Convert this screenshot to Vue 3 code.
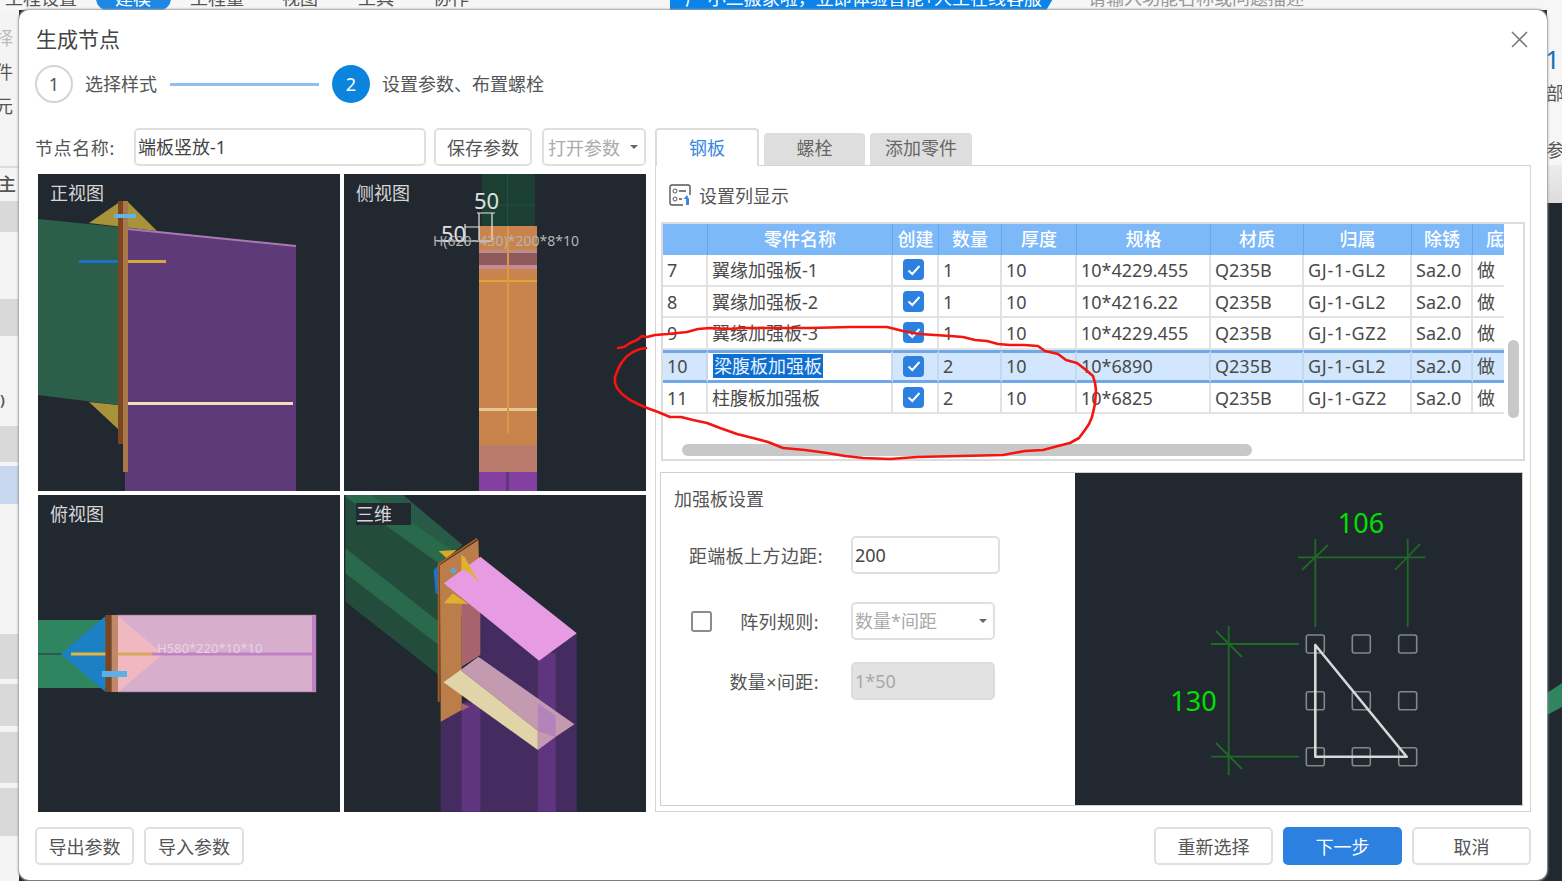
<template>
  <div class="app">
    <!-- software window behind the dialog -->
    <div class="topbar">
      <div class="nav-item" style="width: 96px; padding-left: 5px">工程设置</div>
      <div class="nav-item nav-active">建模</div>
      <div class="nav-item" style="width: 92px">工程量</div>
      <div class="nav-item" style="width: 76px">视图</div>
      <div class="nav-item" style="width: 75px">工具</div>
      <div class="nav-item" style="width: 75px">协作</div>
      <div class="banner">广 小二搬家啦，立即体验智能+人工在线客服</div>
      <div class="search">
        <span>请输入功能名称或问题描述</span>
        <svg width="16" height="16" viewBox="0 0 16 16"><circle cx="7" cy="5" r="6" fill="none" stroke="#999" stroke-width="1.5" /></svg>
      </div>
    </div>
    <div class="under">
      <div class="side-left">
        <div class="side-text muted">择</div>
        <div class="side-text">件</div>
        <div class="side-text">元</div>
        <div class="side-head">主</div>
        <div class="band" style="height: 31px"></div>
        <div class="gap" style="height: 67px"></div>
        <div class="band" style="height: 37px"></div>
        <div class="gap paren">)</div>
        <div class="band" style="height: 36px"></div>
        <div class="band selected"></div>
        <div class="gap" style="height: 130px"></div>
        <div class="band" style="height: 45px"></div>
        <div class="band" style="height: 42px; margin-top: 5px"></div>
        <div class="band" style="height: 51px; margin-top: 6px"></div>
        <div class="band" style="height: 48px; margin-top: 5px"></div>
      </div>
      <div class="side-right">
        <div class="right-top">
          <div class="right-mark">1</div>
          <div class="side-text">部</div>
          <div class="side-text" style="margin-top: 23px">参</div>
        </div>
        <div class="right-band"></div>
        <div class="right-dark">
          <svg width="15" height="40" viewBox="0 0 15 40"><polygon points="0,12 15,2 15,26 0,34" fill="#2f8560" /></svg>
        </div>
      </div>
    </div>

    <div class="dialog">
      <div class="dialog-head">
        <div class="dialog-title">生成节点</div>
        <svg class="close" width="17" height="17" viewBox="0 0 17 17">
          <path d="M1 1L16 16M16 1L1 16" stroke="#7d7d7d" stroke-width="1.6" fill="none" />
        </svg>
      </div>

      <div class="stepper">
        <div class="step-circle">1</div>
        <div class="step-text">选择样式</div>
        <div class="step-line"></div>
        <div class="step-circle current">2</div>
        <div class="step-text">设置参数、布置螺栓</div>
      </div>

      <div class="body">
        <div class="left-col">
          <div class="name-row">
            <div class="name-label">节点名称:</div>
            <div class="field name-field">端板竖放-1</div>
            <button class="btn save-btn">保存参数</button>
            <button class="btn open-btn">打开参数<i class="caret"></i></button>
          </div>

          <div class="views">
            <div class="view">
              <div class="view-label">正视图</div>
              <svg class="view-svg" viewBox="38 174 302 317">
                <polygon points="89,223 121,201 127,201 157,231" fill="#a8933a" />
                <polygon points="89,402 118,405 118,429" fill="#a8933a" />
                <polygon points="38,219 118,227 118,405 38,395" fill="#2b5f4a" />
                <polygon points="128,228 296,246 296,491 125,491 125,300" fill="#5f3a78" />
                <line x1="128" y1="229" x2="296" y2="246" stroke="#a87ab0" stroke-width="2" />
                <rect x="118" y="201" width="5" height="243" fill="#7a4520" />
                <rect x="123" y="201" width="5" height="271" fill="#a9784a" />
                <rect x="114" y="214" width="22" height="4" fill="#5fb4e8" />
                <rect x="79" y="260" width="39" height="3" fill="#1f6fc8" />
                <rect x="128" y="260" width="38" height="3" fill="#d8a838" />
                <rect x="128" y="402" width="165" height="3" fill="#efe0b8" />
              </svg>
            </div>

            <div class="view">
              <div class="view-label">侧视图</div>
              <svg class="view-svg" viewBox="344 174 302 317">
                <rect x="482" y="174" width="53" height="52" fill="#1b3f33" />
                <path d="M507.5 174V226M482 205H535" stroke="#23503f" stroke-width="1" />
                <rect x="479" y="226" width="58" height="219" fill="#c9844e" />
                <rect x="479" y="250" width="58" height="3" fill="#c08a8a" />
                <rect x="479" y="253" width="58" height="12" fill="#8f5a5c" />
                <rect x="479" y="265" width="58" height="4" fill="#c88a9a" />
                <rect x="479" y="280" width="58" height="2" fill="#d8a838" />
                <rect x="479" y="408" width="58" height="3" fill="#e8c890" />
                <rect x="507" y="226" width="2" height="207" fill="#d89848" />
                <rect x="479" y="445" width="58" height="27" fill="#b97c6c" />
                <rect x="479" y="472" width="58" height="19" fill="#8340a0" />
                <rect x="506" y="472" width="3" height="19" fill="#5f3a78" />
                <path d="M477 213H495M479 213V240M492 213V240M465 227H479M465 224V243M437 241H492" stroke="#e8e8e8" stroke-width="1.2" fill="none" />
                <text x="474" y="209" class="dim-white">50</text>
                <text x="441" y="242" class="dim-white">50</text>
                <text x="433" y="246" class="dim-gray">H(620~430)*200*8*10</text>
              </svg>
            </div>

            <div class="view">
              <div class="view-label">俯视图</div>
              <svg class="view-svg" viewBox="38 495 302 317">
                <rect x="38" y="620" width="68" height="68" fill="#2f8560" />
                <rect x="38" y="653" width="33" height="2" fill="#2a5a48" />
                <polygon points="61,654 105.5,616 105.5,692" fill="#1c80c4" />
                <rect x="71" y="652.5" width="35" height="3" fill="#e0b840" />
                <rect x="118" y="615" width="198" height="77" fill="#d8aecd" stroke="#8a6a8a" stroke-width="0.6" />
                <rect x="312" y="615.5" width="4" height="76" fill="#c080c8" />
                <polygon points="118,616 163,654 118,692" fill="#f0b8c0" />
                <rect x="105.5" y="615" width="6" height="77" fill="#7a4520" />
                <rect x="111.5" y="615" width="6.5" height="77" fill="#c08a6a" />
                <rect x="118" y="652.5" width="34" height="3" fill="#d8a860" />
                <rect x="152" y="652.5" width="160" height="3" fill="#c080c8" />
                <rect x="102" y="671" width="25" height="6" fill="#5ab0e8" />
                <text x="157" y="653" class="dim-pink">H580*220*10*10</text>
              </svg>
            </div>

            <div class="view">
              <div class="view-label">三维</div>
              <svg class="view-svg" viewBox="344 495 302 317">
                <!-- coordinates below were read off a zoomed crop, so the group maps them back -->
                <g transform="translate(30 490) scale(0.3968 0.3333)">
                  <polygon points="795,15 940,15 1090,165 1030,220 1030,555 795,335" fill="#234c3d" />
                  <polygon points="860,15 940,15 1090,165 1070,185" fill="#285a48" />
                  <polygon points="795,15 860,15 1070,185 1030,220 795,20" fill="#2a6a4c" />
                  <polygon points="795,175 1030,395 1030,465 795,250" fill="#2a6a4c" />
                  <polygon points="1135,330 1285,510 1378,430 1378,965 1035,965 1035,690 1135,600" fill="#452c60" />
                  <rect x="1088" y="640" width="47" height="325" fill="#5f3580" />
                  <rect x="1280" y="490" width="45" height="475" fill="#5f3580" />
                  <polygon points="1030,183 1075,180 1050,205" fill="#d8a828" />
                  <polygon points="1017,240 1030,225 1030,315 1022,310" fill="#1f70c8" />
                  <polygon points="1033,225 1130,150 1135,340 1088,375 1088,660 1035,695" fill="#bb7d4a" />
                  <polygon points="1088,340 1135,300 1135,495 1088,530 1088,640 1108,650 1088,662" fill="#a8646e" />
                  <polyline points="1030,635 1030,222 1127,146" fill="none" stroke="#a85c20" stroke-width="5" />
                  <polygon points="1043,280 1135,200 1378,430 1283,512" fill="#e79be2" />
                  <polygon points="1087,195 1095,200 1132,278 1105,245 1087,240" fill="#e0b030" />
                  <polygon points="1043,340 1065,310 1105,342" fill="#e0b030" />
                  <ellipse cx="1067" cy="242" rx="7" ry="8" fill="#55a8dc" />
                  <polygon points="1085,540 1130,500 1372,703 1325,740 1280,722" fill="#c49ab0" />
                  <polygon points="1280,640 1325,678 1325,740 1280,722" fill="#b384bc" />
                  <polygon points="1042,577 1085,540 1280,722 1280,780" fill="#e0d4a8" />
                  <polygon points="1280,722 1325,740 1280,780" fill="#c49ab0" />
                </g>
              </svg>
            </div>
          </div>
        </div>

        <div class="right-col">
          <div class="tabs">
            <div
              v-for="tab in tabs"
              :key="tab"
              class="tab"
              :class="{ active: tab === activeTab }"
            >{{ tab }}</div>
          </div>

          <div class="pane">
            <div class="col-setting">
              <svg width="23" height="22" viewBox="0 0 23 22">
                <rect x="1" y="1" width="20" height="20" rx="2" fill="none" stroke="#555" stroke-width="1.4" />
                <circle cx="6" cy="7" r="2" fill="none" stroke="#555" />
                <circle cx="6" cy="15" r="2" fill="none" stroke="#555" />
                <path d="M10 7H17M10 15H13" stroke="#555" stroke-width="1.3" />
                <rect x="14" y="11" width="9" height="11" fill="#fff" />
                <path d="M18 11L14.5 15H17V21H20V15" fill="#3a86e0" />
              </svg>
              <span>设置列显示</span>
            </div>

            <div class="table-box">
              <table class="grid">
                <colgroup>
                  <col v-for="col in columns" :key="col.title" :style="{ width: col.width + 'px' }" />
                </colgroup>
                <thead>
                  <tr>
                    <th v-for="col in columns" :key="col.title">{{ col.title }}</th>
                  </tr>
                </thead>
                <tbody>
                  <tr v-for="row in rows" :key="row.no" :class="{ current: row.no === 10 }">
                    <td>{{ row.no }}</td>
                    <td :class="{ 'name-cell': row.no === 10 }">
                      <span :class="{ picked: row.no === 10 }">{{ row.name }}</span>
                    </td>
                    <td class="check-cell">
                      <span class="check">
                        <svg width="14" height="12" viewBox="0 0 14 12"><path d="M1.5 6.5L5.3 10L12.5 2" fill="none" stroke="#fff" stroke-width="2" /></svg>
                      </span>
                    </td>
                    <td>{{ row.qty }}</td>
                    <td>{{ row.thick }}</td>
                    <td>{{ row.spec }}</td>
                    <td>{{ row.material }}</td>
                    <td class="owner-cell">{{ row.owner }}</td>
                    <td>{{ row.rust }}</td>
                    <td>做</td>
                  </tr>
                </tbody>
              </table>
              <div class="scroll-h"></div>
              <div class="scroll-v"></div>
            </div>

            <div class="lower">
              <div class="form">
                <div class="form-title">加强板设置</div>
                <div class="form-row first">
                  <div class="form-label" style="width: 162px">距端板上方边距:</div>
                  <div class="field margin-field">200</div>
                </div>
                <div class="form-row second">
                  <span class="plain-check"></span>
                  <div class="form-label" style="width: 107px">阵列规则:</div>
                  <div class="field rule-field muted-text">数量*间距<i class="caret"></i></div>
                </div>
                <div class="form-row third">
                  <div class="form-label" style="width: 158px">数量×间距:</div>
                  <div class="field rule-field disabled">1*50</div>
                </div>
              </div>

              <svg class="preview" viewBox="1075 473 447 332">
                <g stroke="#1f6b25" stroke-width="1.8" fill="none">
                  <path d="M1315.3 539V627M1407.7 539V627M1298 557.3H1425.7" />
                  <path d="M1302 570L1328 545M1395 570L1420 544" />
                  <path d="M1228.7 626V775M1211 644H1299M1211 756.7H1299" />
                  <path d="M1216 631L1242 657M1216 743L1242 769" />
                </g>
                <g fill="none" stroke="#84868c" stroke-width="1.6">
                  <template v-for="y in boltRows" :key="y">
                    <rect v-for="x in boltCols" :key="x" :x="x - 9" :y="y - 9" width="18" height="18" rx="2" />
                  </template>
                </g>
                <polygon points="1315.3,645 1315.3,756.7 1406.7,756.7" fill="none" stroke="#d8d8d8" stroke-width="2.6" stroke-linejoin="round" />
                <text x="1361" y="533" text-anchor="middle" class="dim-green">106</text>
                <text x="1193.5" y="711" text-anchor="middle" class="dim-green">130</text>
              </svg>
            </div>
          </div>
        </div>
      </div>

      <div class="footer">
        <button class="btn foot-btn">导出参数</button>
        <button class="btn foot-btn" style="width: 100px; margin-left: 10px">导入参数</button>
        <div class="spacer"></div>
        <button class="btn foot-btn wide">重新选择</button>
        <button class="btn foot-btn wide primary">下一步</button>
        <button class="btn foot-btn wide">取消</button>
      </div>
    </div>

    <!-- red marker scribble drawn over the screenshot -->
    <svg class="scribble" viewBox="0 0 1562 881">
      <polyline
        fill="none"
        stroke="#f5140f"
        stroke-width="2.6"
        stroke-linejoin="round"
        stroke-linecap="round"
        :points="scribble"
      />
    </svg>
  </div>
</template>

<script setup>
const tabs = ['钢板', '螺栓', '添加零件']
const activeTab = '钢板'

const columns = [
  { title: '', width: 45 },
  { title: '零件名称', width: 185 },
  { title: '创建', width: 46 },
  { title: '数量', width: 63 },
  { title: '厚度', width: 75 },
  { title: '规格', width: 134 },
  { title: '材质', width: 93 },
  { title: '归属', width: 108 },
  { title: '除锈', width: 61 },
  { title: '底', width: 31 }
]

const rows = [
  { no: 7, name: '翼缘加强板-1', qty: 1, thick: 10, spec: '10*4229.455', material: 'Q235B', owner: 'GJ-1-GL2', rust: 'Sa2.0' },
  { no: 8, name: '翼缘加强板-2', qty: 1, thick: 10, spec: '10*4216.22', material: 'Q235B', owner: 'GJ-1-GL2', rust: 'Sa2.0' },
  { no: 9, name: '翼缘加强板-3', qty: 1, thick: 10, spec: '10*4229.455', material: 'Q235B', owner: 'GJ-1-GZ2', rust: 'Sa2.0' },
  { no: 10, name: '梁腹板加强板', qty: 2, thick: 10, spec: '10*6890', material: 'Q235B', owner: 'GJ-1-GL2', rust: 'Sa2.0' },
  { no: 11, name: '柱腹板加强板', qty: 2, thick: 10, spec: '10*6825', material: 'Q235B', owner: 'GJ-1-GZ2', rust: 'Sa2.0' }
]

const boltCols = [1315.3, 1361.3, 1407.7]
const boltRows = [644, 700.7, 756.7]

const scribble = '618,348 624,347 630,343 637,340 642,336 647,337 655,335 668,334 687,332 698,329 710,328 728,329 743,328 780,328 810,328 850,327 887,327 895,329 903,331 919,334 935,335 950,336 963,337 975,340 987,341 998,344 1010,345 1024,345 1038,346 1045,351 1058,354 1066,360 1077,363 1086,370 1093,376 1095,383 1096,390 1095,404 1092,417 1089,424 1085,430 1079,438 1070,443 1058,446 1043,450 1025,451 1003,455 960,456 917,457 890,459 863,458 845,456 827,453 805,450 783,448 768,442 753,438 737,434 720,428 707,423 693,420 681,417 670,417 658,412 647,408 638,404 630,400 622,394 617,388 615,383 615,377 618,369 622,362 627,356 633,352 640,349 646,348'
</script>

<style>
html,
body {
  margin: 0;
  background: #212830;
}
</style>

<style scoped>
.app {
  position: relative;
  width: 1562px;
  height: 881px;
  overflow: hidden;
  background: #212830;
  color: #444;
  font-family: "Noto Sans", "Noto Sans CJK SC", sans-serif;
  font-size: 18px;
}

.topbar {
  height: 10px;
  display: flex;
  background: #f6f6f6;
  overflow: hidden;
  line-height: 22px;
  color: #555;
}

.nav-item {
  margin-top: -13px;
  height: 23px;
  box-sizing: border-box;
  flex-shrink: 0;
}

.nav-active {
  width: 75px;
  margin-right: 19px;
  padding-left: 19px;
  background: #1d87e6;
  color: #fff;
  border-radius: 12px;
}

.banner {
  width: 390px;
  margin-left: 162px;
  margin-top: -13px;
  padding-left: 15px;
  box-sizing: border-box;
  height: 23px;
  background: #0a84ea;
  color: #fff;
  white-space: nowrap;
  clip-path: polygon(0 0, 100% 0, 96.5% 100%, 0 100%);
}

.search {
  flex: 1;
  margin: -13px 17px 0 20px;
  padding-left: 8px;
  height: 23px;
  display: flex;
  justify-content: space-between;
  color: #999;
  white-space: nowrap;
}

.under {
  height: 871px;
  display: flex;
  justify-content: space-between;
}

.side-left {
  width: 19px;
  background: #f4f4f4;
  overflow: hidden;
}

.side-text {
  height: 34px;
  line-height: 34px;
  font-size: 18px;
  margin-left: -5px;
  color: #555;
}

.side-text:first-child {
  margin-top: 11px;
}

.muted {
  color: #bbb;
}

.side-head {
  margin-top: 43px;
  height: 33px;
  line-height: 33px;
  border-top: 2px solid #ddd;
  margin-left: -2px;
  font-size: 18px;
  font-weight: 500;
  color: #555;
}

.band {
  background: #d9d9d9;
}

.band.selected {
  height: 38px;
  margin-top: 4px;
  background: #c6d7ee;
}

.gap {
  background: #f4f4f4;
}

.paren {
  height: 90px;
  line-height: 126px;
  font-size: 15px;
  font-weight: 600;
  color: #555;
}

.side-right {
  width: 15px;
  display: flex;
  flex-direction: column;
}

.right-top {
  height: 155px;
  background: #f6f6f6;
  overflow: hidden;
}

.right-top .side-text {
  margin-top: 0;
  margin-left: -1px;
}

.right-mark {
  margin-top: 32px;
  height: 34px;
  line-height: 34px;
  font-size: 26px;
  margin-left: -2px;
  color: #1a70b8;
}

.right-band {
  height: 38px;
  background: linear-gradient(#ececec, #dcdcdc);
}

.right-dark {
  flex: 1;
  padding-top: 478px;
}

.right-dark svg {
  display: block;
}

/* the dialog sits on top of the application window */
.dialog {
  position: absolute;
  left: 19px;
  top: 10px;
  width: 1528px;
  height: 870px;
  box-sizing: border-box;
  padding: 15px 16px 0;
  background: #fff;
  border-radius: 10px;
  box-shadow: 0 0 2px 1px #9c9c9c;
  display: flex;
  flex-direction: column;
}

.dialog-head {
  height: 28px;
  display: flex;
  justify-content: space-between;
  align-items: center;
  padding-left: 1px;
}

.dialog-title {
  font-size: 21px;
  line-height: 30px;
  color: #444;
}

.close {
  margin-right: 3px;
}

.stepper {
  height: 38px;
  margin-top: 12px;
  display: flex;
  align-items: center;
}

.step-circle {
  width: 38px;
  height: 38px;
  box-sizing: border-box;
  border: 2px solid #d4d4d4;
  border-radius: 50%;
  text-align: center;
  line-height: 34px;
  color: #555;
}

.step-circle.current {
  margin-left: 13px;
  border: none;
  background: #0a84dc;
  line-height: 38px;
  color: #fff;
}

.step-text {
  margin-left: 12px;
  margin-top: -2px;
  color: #555;
}

.step-line {
  width: 149px;
  height: 3px;
  margin-left: 13px;
  background: #8cc0f0;
}

.body {
  height: 684px;
  margin-top: 25px;
  display: flex;
}

.left-col {
  width: 611px;
  margin-right: 9px;
}

.name-row {
  height: 38px;
  display: flex;
  align-items: center;
}

.name-label {
  width: 99px;
  flex-shrink: 0;
  letter-spacing: 0.6px;
  color: #555;
}

.field {
  height: 38px;
  box-sizing: border-box;
  border: 2px solid #e0e0e0;
  border-radius: 5px;
  padding-left: 2px;
  line-height: 35px;
  background: #fff;
  position: relative;
}

.name-field {
  width: 292px;
}

.btn {
  height: 38px;
  box-sizing: border-box;
  border: 2px solid #e0e0e0;
  border-radius: 5px;
  background: #fff;
  color: #555;
  font: inherit;
  padding: 0;
}

.save-btn {
  width: 98px;
  margin-left: 8px;
}

.open-btn {
  width: 104px;
  margin-left: 10px;
  padding-left: 4px;
  text-align: left;
  color: #aaa;
  position: relative;
}

.caret {
  position: absolute;
  right: 6px;
  top: 15px;
  width: 0;
  height: 0;
  border-left: 4px solid transparent;
  border-right: 4px solid transparent;
  border-top: 4px solid #666;
}

.views {
  margin: 8px 0 0 3px;
  display: grid;
  grid-template-columns: 302px 302px;
  grid-template-rows: 317px 317px;
  gap: 4px;
}

.view {
  position: relative;
  background: #212830;
}

.view-svg {
  display: block;
  width: 302px;
  height: 317px;
}

.view-label {
  position: absolute;
  left: 12px;
  top: 8px;
  width: 55px;
  line-height: 22px;
  background: #212830;
  color: #d6d6d6;
  z-index: 1;
}

.dim-white {
  font-size: 22px;
  fill: #e0e0e0;
}

.dim-gray {
  font-size: 14px;
  fill: #b4b4b4;
}

.dim-pink {
  font-size: 13px;
  fill: #e6d4e2;
}

.dim-green {
  font-size: 27px;
  fill: #00e000;
}

.right-col {
  flex: 1;
  min-width: 0;
}

.tabs {
  height: 37px;
  display: flex;
  align-items: flex-end;
  position: relative;
  z-index: 1;
}

.tab {
  width: 101px;
  height: 32px;
  margin-right: 5px;
  box-sizing: border-box;
  background: #dedede;
  border-radius: 4px 4px 0 0;
  text-align: center;
  line-height: 30px;
  color: #666;
}

.tab:last-child {
  width: 102px;
}

.tab.active {
  width: 104px;
  height: 38px;
  margin-bottom: -1px;
  background: #fff;
  border: 2px solid #dcdcdc;
  border-bottom: none;
  line-height: 36px;
  color: #3a86e0;
}

.pane {
  height: 647px;
  box-sizing: border-box;
  border: 1px solid #d4d4d4;
  padding: 0 5px;
}

.col-setting {
  height: 56px;
  display: flex;
  align-items: center;
  gap: 7px;
  padding: 2px 0 0 8px;
  box-sizing: border-box;
  color: #555;
}

.table-box {
  position: relative;
  height: 239px;
  box-sizing: border-box;
  border: 2px solid #dcdcdc;
  overflow: hidden;
}

.grid {
  table-layout: fixed;
  width: 841px;
  border-collapse: separate;
  border-spacing: 0;
  font-size: 18px;
}

.grid th {
  height: 31px;
  box-sizing: border-box;
  padding: 0 0 3px;
  background: #7db8f8;
  border-right: 1px solid #68a6ea;
  color: #fff;
  font-weight: 500;
  white-space: nowrap;
  overflow: hidden;
}

.grid th:last-child {
  text-align: left;
  padding-left: 13px;
}

.grid td {
  height: 31.5px;
  box-sizing: border-box;
  padding: 1px 0 0 4px;
  border-right: 2px solid #e2e2e2;
  border-bottom: 2px solid #e2e2e2;
  color: #4a4a4a;
  line-height: 26px;
  white-space: nowrap;
  overflow: hidden;
}

.grid td.owner-cell {
  letter-spacing: 0.7px;
}

.grid th:last-child,
.grid td:last-child {
  border-right: none;
}

.grid tr.current td {
  padding-top: 0;
  padding-bottom: 1px;
  background: #d2e7fd;
  border-top: 3px solid #6fa8e8;
  border-bottom: 3px solid #6fa8e8;
  border-right-color: #c4d8ee;
}

.grid tr.current td.name-cell {
  background: #fff;
}

.picked {
  padding: 0 1px;
  margin-left: 1px;
  background: #0f6fd0;
  color: #e8f2ff;
}

.grid td.check-cell,
.grid tr.current td.check-cell {
  padding: 0 3px 0 0;
  text-align: center;
  line-height: 0;
}

.check {
  display: inline-flex;
  align-items: center;
  justify-content: center;
  width: 21px;
  height: 21px;
  background: #2c80e0;
  border-radius: 4px;
}

.scroll-h {
  position: absolute;
  left: 19px;
  top: 220px;
  width: 570px;
  height: 12px;
  border-radius: 6px;
  background: #c8c8c8;
}

.scroll-v {
  position: absolute;
  left: 845px;
  top: 116px;
  width: 11px;
  height: 78px;
  border-radius: 6px;
  background: #c8c8c8;
}

.lower {
  height: 334px;
  margin: 11px 2px 0 -1px;
  box-sizing: border-box;
  border: 1px solid #cfcfcf;
  display: flex;
}

.form {
  width: 414px;
  flex-shrink: 0;
  box-sizing: border-box;
  padding-top: 13px;
}

.form-title {
  height: 26px;
  line-height: 26px;
  padding-left: 13px;
  color: #555;
}

.form-row {
  display: flex;
  align-items: center;
}

.form-row.first {
  margin-top: 24px;
}

.form-row.second {
  margin-top: 28px;
  padding-left: 30px;
}

.form-row.third {
  margin-top: 22px;
}

.form-label {
  flex-shrink: 0;
  text-align: right;
  letter-spacing: 0.4px;
  color: #555;
  white-space: nowrap;
}

.margin-field {
  width: 149px;
  margin-left: 28px;
}

.rule-field {
  width: 144px;
  margin-left: 32px;
}

.plain-check {
  width: 21px;
  height: 21px;
  box-sizing: border-box;
  border: 2px solid #8c8c8c;
  border-radius: 3px;
  flex-shrink: 0;
}

.muted-text {
  color: #aaa;
}

.disabled {
  background: #e2e2e2;
  border-color: #d8dde2;
  color: #a8a8a8;
}

.preview {
  width: 447px;
  display: block;
  height: 332px;
  background: #212830;
}

.footer {
  margin-top: 15px;
  display: flex;
}

.foot-btn {
  width: 99px;
}

.foot-btn.wide {
  width: 119px;
  margin-left: 10px;
}

.foot-btn.primary {
  background: #2c80e0;
  border-color: #2c80e0;
  color: #fff;
}

.spacer {
  flex: 1;
}

.scribble {
  position: absolute;
  left: 0;
  top: 0;
  width: 1562px;
  height: 881px;
  pointer-events: none;
}
</style>
